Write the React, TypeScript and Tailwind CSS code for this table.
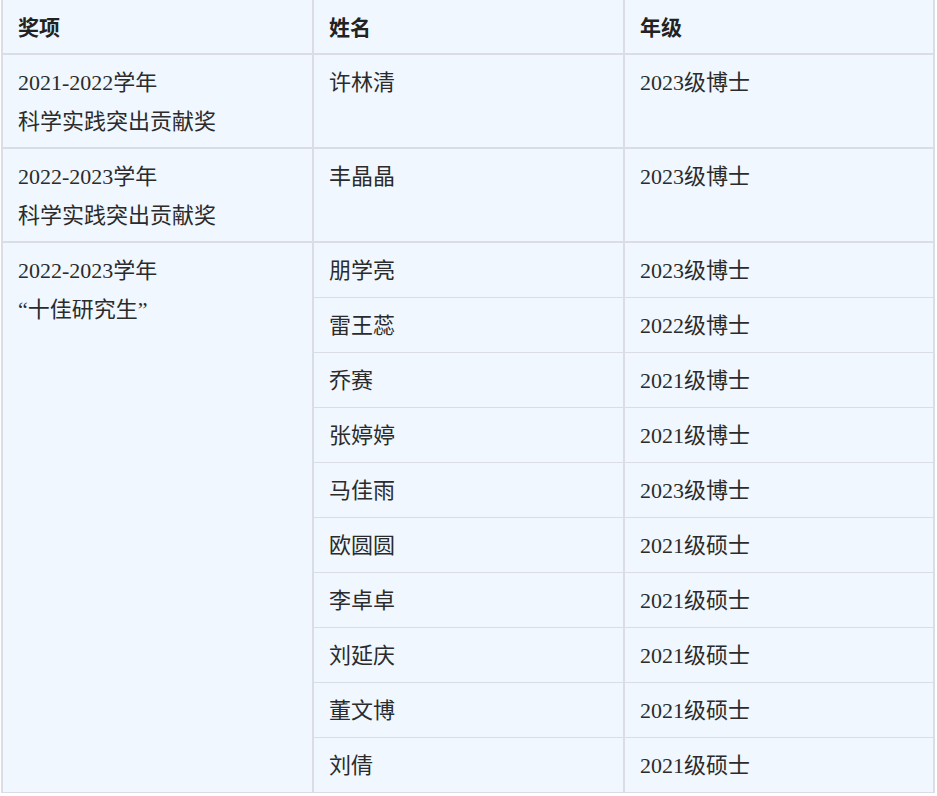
type Row = { name: string; grade: string };

const top: { award: string[]; name: string; grade: string }[] = [
  { award: ["2021-2022学年", "科学实践突出贡献奖"], name: "许林清", grade: "2023级博士" },
  { award: ["2022-2023学年", "科学实践突出贡献奖"], name: "丰晶晶", grade: "2023级博士" },
];

const group: Row[] = [
  { name: "朋学亮", grade: "2023级博士" },
  { name: "雷王蕊", grade: "2022级博士" },
  { name: "乔赛", grade: "2021级博士" },
  { name: "张婷婷", grade: "2021级博士" },
  { name: "马佳雨", grade: "2023级博士" },
  { name: "欧圆圆", grade: "2021级硕士" },
  { name: "李卓卓", grade: "2021级硕士" },
  { name: "刘延庆", grade: "2021级硕士" },
  { name: "董文博", grade: "2021级硕士" },
  { name: "刘倩", grade: "2021级硕士" },
];

const font = "font-['Liberation_Serif','Noto_Sans_CJK_SC',serif]";
const th =
  "border-r-2 border-b-2 border-[#dadde3] pl-[15px] pr-4 py-[7px] text-left align-middle text-[21px] leading-[39px] font-bold text-[#222] font-['Noto_Sans_CJK_SC',sans-serif]";
const tdTop = "border-r-2 border-b-2 border-[#dadde3] pl-[15px] pr-4 pt-2 pb-[6px] align-top leading-[39px]";
const tdGroup = "border-r-2 border-b border-[#dadde3] pl-[15px] pr-4 pt-2 pb-[7px] align-top leading-[39px]";

export default function App() {
  return (
    <div className="min-h-[796px] bg-white">
      <table
        className={`ml-px w-[934px] table-fixed border-separate border-spacing-0 border-l-2 border-[#dadde3] bg-[#f0f7ff] text-[22px] text-[#2b2b2b] ${font}`}
      >
        <colgroup>
          <col className="w-[311px]" />
          <col className="w-[311px]" />
          <col />
        </colgroup>
        <thead>
          <tr>
            <th className={th}>奖项</th>
            <th className={th}>姓名</th>
            <th className={th}>年级</th>
          </tr>
        </thead>
        <tbody>
          {top.map((r) => (
            <tr key={r.name}>
              <td className={tdTop}>
                {r.award.map((a) => (
                  <div key={a}>{a}</div>
                ))}
              </td>
              <td className={tdTop}>{r.name}</td>
              <td className={tdTop}>{r.grade}</td>
            </tr>
          ))}
          {group.map((r, i) => (
            <tr key={r.name}>
              {i === 0 && (
                <td rowSpan={group.length} className={tdGroup}>
                  <div>2022-2023学年</div>
                  <div>“十佳研究生”</div>
                </td>
              )}
              <td className={tdGroup}>{r.name}</td>
              <td className={tdGroup}>{r.grade}</td>
            </tr>
          ))}
        </tbody>
      </table>
    </div>
  );
}
